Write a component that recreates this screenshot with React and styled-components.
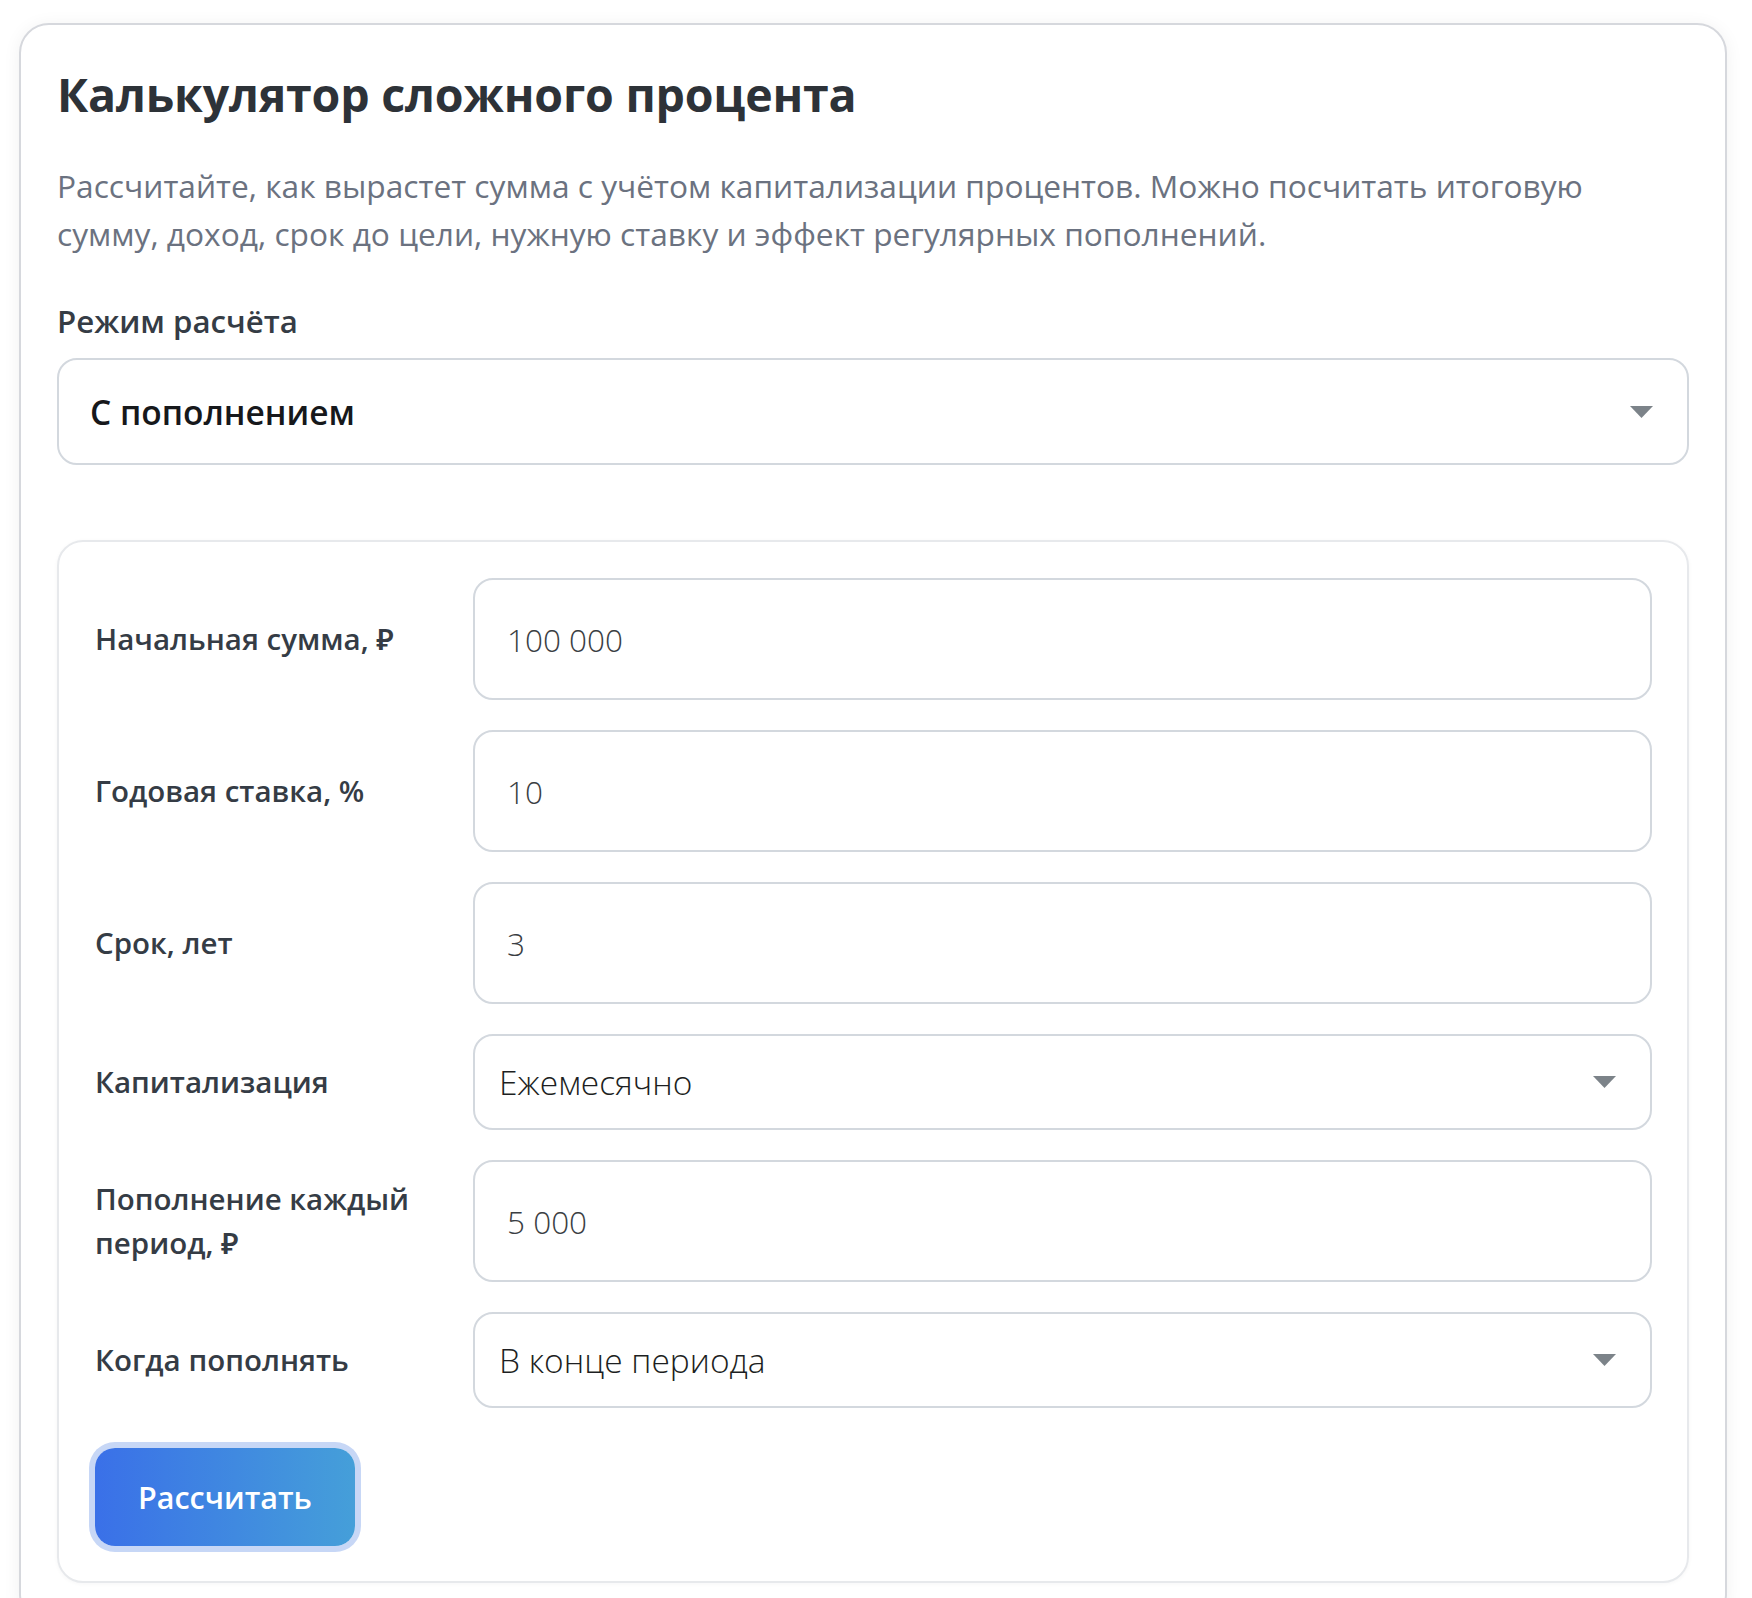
import React from "react";
import styled, { createGlobalStyle } from "styled-components";

const Global = createGlobalStyle`
  html, body { margin: 0; padding: 0; background: #ffffff; }
  body { font-family: "Open Sans", "Noto Sans", sans-serif; }
  * { box-sizing: border-box; }
`;

const Page = styled.div`
  padding: 23px 25px 0 19px;
`;

const Card = styled.section`
  background: #fff;
  border: 2px solid #d6d8dd;
  border-radius: 30px;
  box-shadow: 0 2px 18px rgba(20, 24, 40, 0.06);
  padding: 42px 36px 40px 36px;
`;

const Title = styled.h1`
  margin: 0;
  font-size: 46.5px;
  line-height: 55px;
  font-weight: 700;
  color: #2d3238;
  letter-spacing: -0.2px;
`;

const Lead = styled.p`
  margin: 40px 0 0 0;
  max-width: 1560px;
  font-size: 31.7px;
  line-height: 48px;
  color: #6b7280;
  font-weight: 400;
`;

const FieldLabel = styled.label`
  display: block;
  margin-top: 43px;
  font-size: 31.2px;
  line-height: 40px;
  font-weight: 600;
  color: #353c45;
`;

const SelectWrap = styled.div`
  position: relative;
  margin-top: ${(p) => p.$mt || 0}px;
`;

const Select = styled.select`
  appearance: none;
  -webkit-appearance: none;
  width: 100%;
  height: ${(p) => p.$h}px;
  border: 2px solid #d3d8de;
  border-radius: 20px;
  background: #fff;
  font-family: "Open Sans", "Noto Sans", sans-serif;
  font-size: 33.5px;
  font-weight: ${(p) => (p.$strong ? 600 : 300)};
  color: ${(p) => (p.$strong ? "#16181b" : "#1d1f22")};
  padding: 0 70px 0 ${(p) => p.$pl}px;
  outline: none;
`;

const Arrow = styled.svg`
  position: absolute;
  right: 36px;
  top: 50%;
  width: 23px;
  height: 12px;
  transform: translateY(-50%);
  pointer-events: none;
`;

const Panel = styled.div`
  margin-top: 75px;
  border: 2px solid #e7e9ec;
  border-radius: 26px;
  box-shadow: 0 1px 4px rgba(20, 24, 40, 0.04);
  padding: 36px 35px 35px 36px;
`;

const Fields = styled.div`
  display: grid;
  grid-template-columns: 340px 1fr;
  column-gap: 38px;
  row-gap: 30px;
  align-items: center;
`;

const RowLabel = styled.label`
  font-size: 29.5px;
  line-height: 44px;
  font-weight: 600;
  color: #353c45;
`;

const Input = styled.input`
  width: 100%;
  height: 122px;
  border: 2px solid #d3d8de;
  border-radius: 20px;
  background: #fff;
  padding: 0 30px 0 32px;
  font-family: "Open Sans", "Noto Sans", sans-serif;
  font-size: 31.5px;
  font-weight: 300;
  color: #3a3e43;
  outline: none;
`;

const Button = styled.button`
  margin-top: 40px;
  width: 260px;
  height: 98px;
  border: none;
  border-radius: 20px;
  background: linear-gradient(90deg, #3a70e8 0%, #459fd9 100%);
  box-shadow: 0 0 0 6px #c7d7f6;
  color: #fff;
  font-family: "Open Sans", "Noto Sans", sans-serif;
  font-size: 30.5px;
  font-weight: 600;
  cursor: pointer;
`;

const Caret = () => (
  <Arrow viewBox="0 0 23 12">
    <polygon points="0,0 23,0 11.5,12" fill="#7c8389" />
  </Arrow>
);

function Dropdown({ h, pl, strong, mt, options }) {
  return (
    <SelectWrap $mt={mt}>
      <Select $h={h} $pl={pl} $strong={strong} defaultValue={options[0]}>
        {options.map((o) => (
          <option key={o} value={o}>
            {o}
          </option>
        ))}
      </Select>
      <Caret />
    </SelectWrap>
  );
}

export default function App() {
  return (
    <Page>
      <Global />
      <Card>
        <Title>Калькулятор сложного процента</Title>
        <Lead>
          Рассчитайте, как вырастет сумма с учётом капитализации процентов. Можно посчитать
          итоговую сумму, доход, срок до цели, нужную ставку и эффект регулярных пополнений.
        </Lead>
        <FieldLabel>Режим расчёта</FieldLabel>
        <Dropdown
          mt={17}
          h={107}
          pl={31}
          strong
          options={["С пополнением", "Итоговая сумма", "Срок до цели", "Нужная ставка"]}
        />
        <Panel>
          <Fields>
            <RowLabel>Начальная сумма, ₽</RowLabel>
            <Input defaultValue="100 000" />
            <RowLabel>Годовая ставка, %</RowLabel>
            <Input defaultValue="10" />
            <RowLabel>Срок, лет</RowLabel>
            <Input defaultValue="3" />
            <RowLabel>Капитализация</RowLabel>
            <Dropdown h={96} pl={24} options={["Ежемесячно", "Ежеквартально", "Ежегодно"]} />
            <RowLabel>
              Пополнение каждый
              <br />
              период, ₽
            </RowLabel>
            <Input defaultValue="5 000" />
            <RowLabel>Когда пополнять</RowLabel>
            <Dropdown h={96} pl={24} options={["В конце периода", "В начале периода"]} />
          </Fields>
          <Button type="button">Рассчитать</Button>
        </Panel>
      </Card>
    </Page>
  );
}
